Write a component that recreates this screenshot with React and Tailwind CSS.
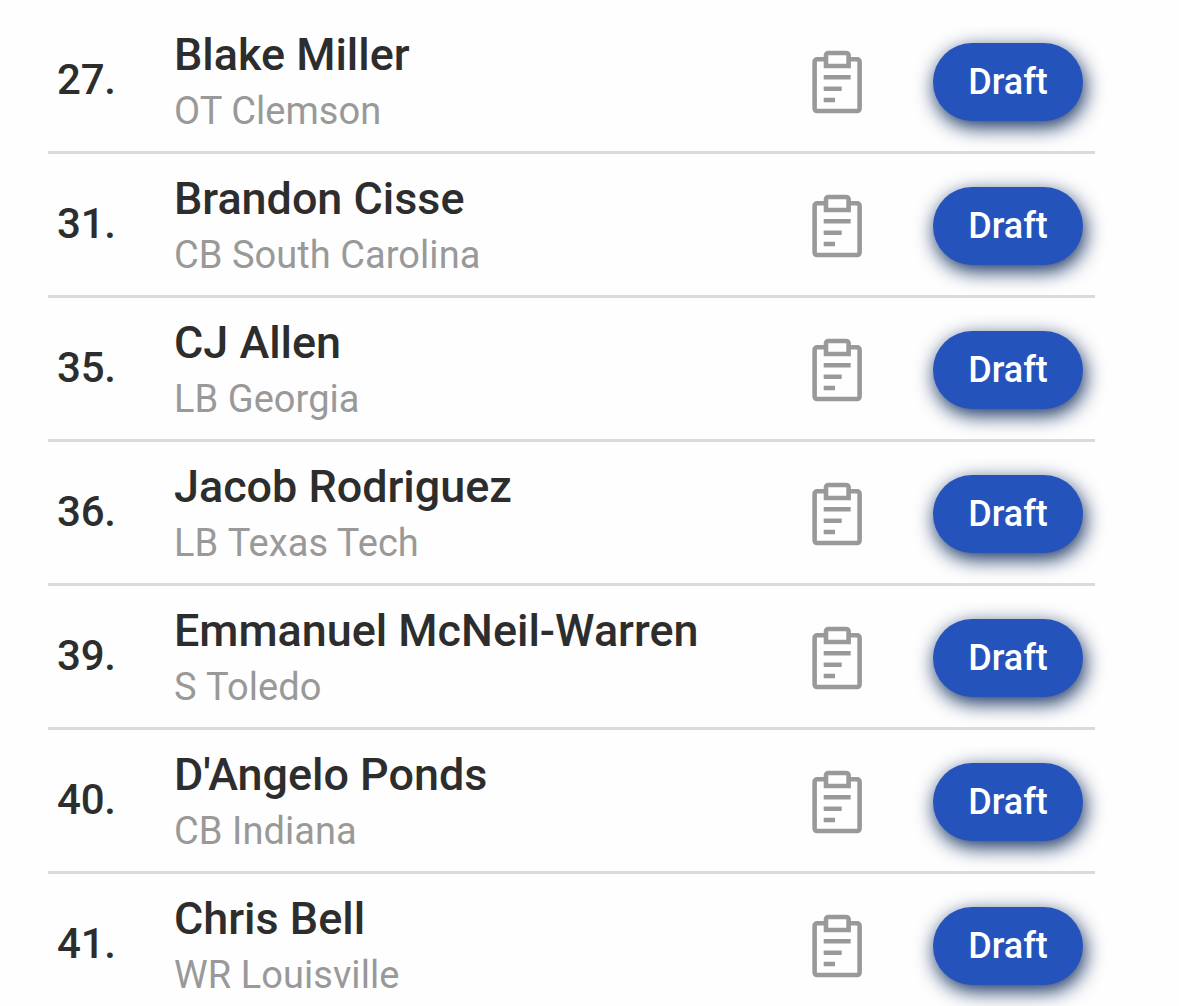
import React from 'react'

const prospects = [
  { rank: 27, name: 'Blake Miller', position: 'OT', school: 'Clemson' },
  { rank: 31, name: 'Brandon Cisse', position: 'CB', school: 'South Carolina' },
  { rank: 35, name: 'CJ Allen', position: 'LB', school: 'Georgia' },
  { rank: 36, name: 'Jacob Rodriguez', position: 'LB', school: 'Texas Tech' },
  { rank: 39, name: 'Emmanuel McNeil-Warren', position: 'S', school: 'Toledo' },
  { rank: 40, name: "D'Angelo Ponds", position: 'CB', school: 'Indiana' },
  { rank: 41, name: 'Chris Bell', position: 'WR', school: 'Louisville' },
]

function ClipboardIcon() {
  return (
    <svg width="50" height="64" viewBox="0 0 50 64" fill="none" stroke="#999999" strokeWidth="4.6">
      <path d="M14 9.3H5a2.4 2.4 0 0 0-2.4 2.4v46.9A2.4 2.4 0 0 0 5 61h40.2a2.4 2.4 0 0 0 2.4-2.4V11.7a2.4 2.4 0 0 0-2.4-2.4H37" />
      <path d="M14 16V5.3A2.3 2.3 0 0 1 16.3 3H34.3A2.3 2.3 0 0 1 36.6 5.3V16Z" />
      <path d="M11.7 27.3H38.7M11.7 38.7H29.7M11.7 50H23" />
    </svg>
  )
}

function ProspectRow({ prospect }) {
  return (
    <li className="flex h-36 items-center border-b-3 border-[#dadada] pt-[2px]">
      <span className="mb-1 w-[126px] pl-[9px] text-[42px] leading-none font-medium tracking-[-0.2px] text-[#2d2d2d]">
        {prospect.rank}.
      </span>
      <div className="flex-1 pt-[2px] whitespace-nowrap">
        <h3 className="text-[44.9px] leading-[56px] font-medium text-[#2d2d2d]">{prospect.name}</h3>
        <p className="text-[38px] leading-[56px] tracking-[0.05px] text-[#999999]">
          {prospect.position} <span className="inline-block">{prospect.school}</span>
        </p>
      </div>
      <button className="mr-[71px]">
        <ClipboardIcon />
      </button>
      <button className="mr-3 h-[78px] w-[150px] rounded-full bg-[#2453bc] text-[36px] font-medium text-white shadow-[2px_6px_20px_rgba(5,35,85,0.95)]">
        Draft
      </button>
    </li>
  )
}

export default function App() {
  return (
    <div className="h-screen overflow-hidden bg-[#fefefe] pt-[10px] pl-12 font-['Roboto',sans-serif]">
      <ul className="w-[1047px]">
        {prospects.map((prospect) => (
          <ProspectRow key={prospect.rank} prospect={prospect} />
        ))}
      </ul>
    </div>
  )
}
